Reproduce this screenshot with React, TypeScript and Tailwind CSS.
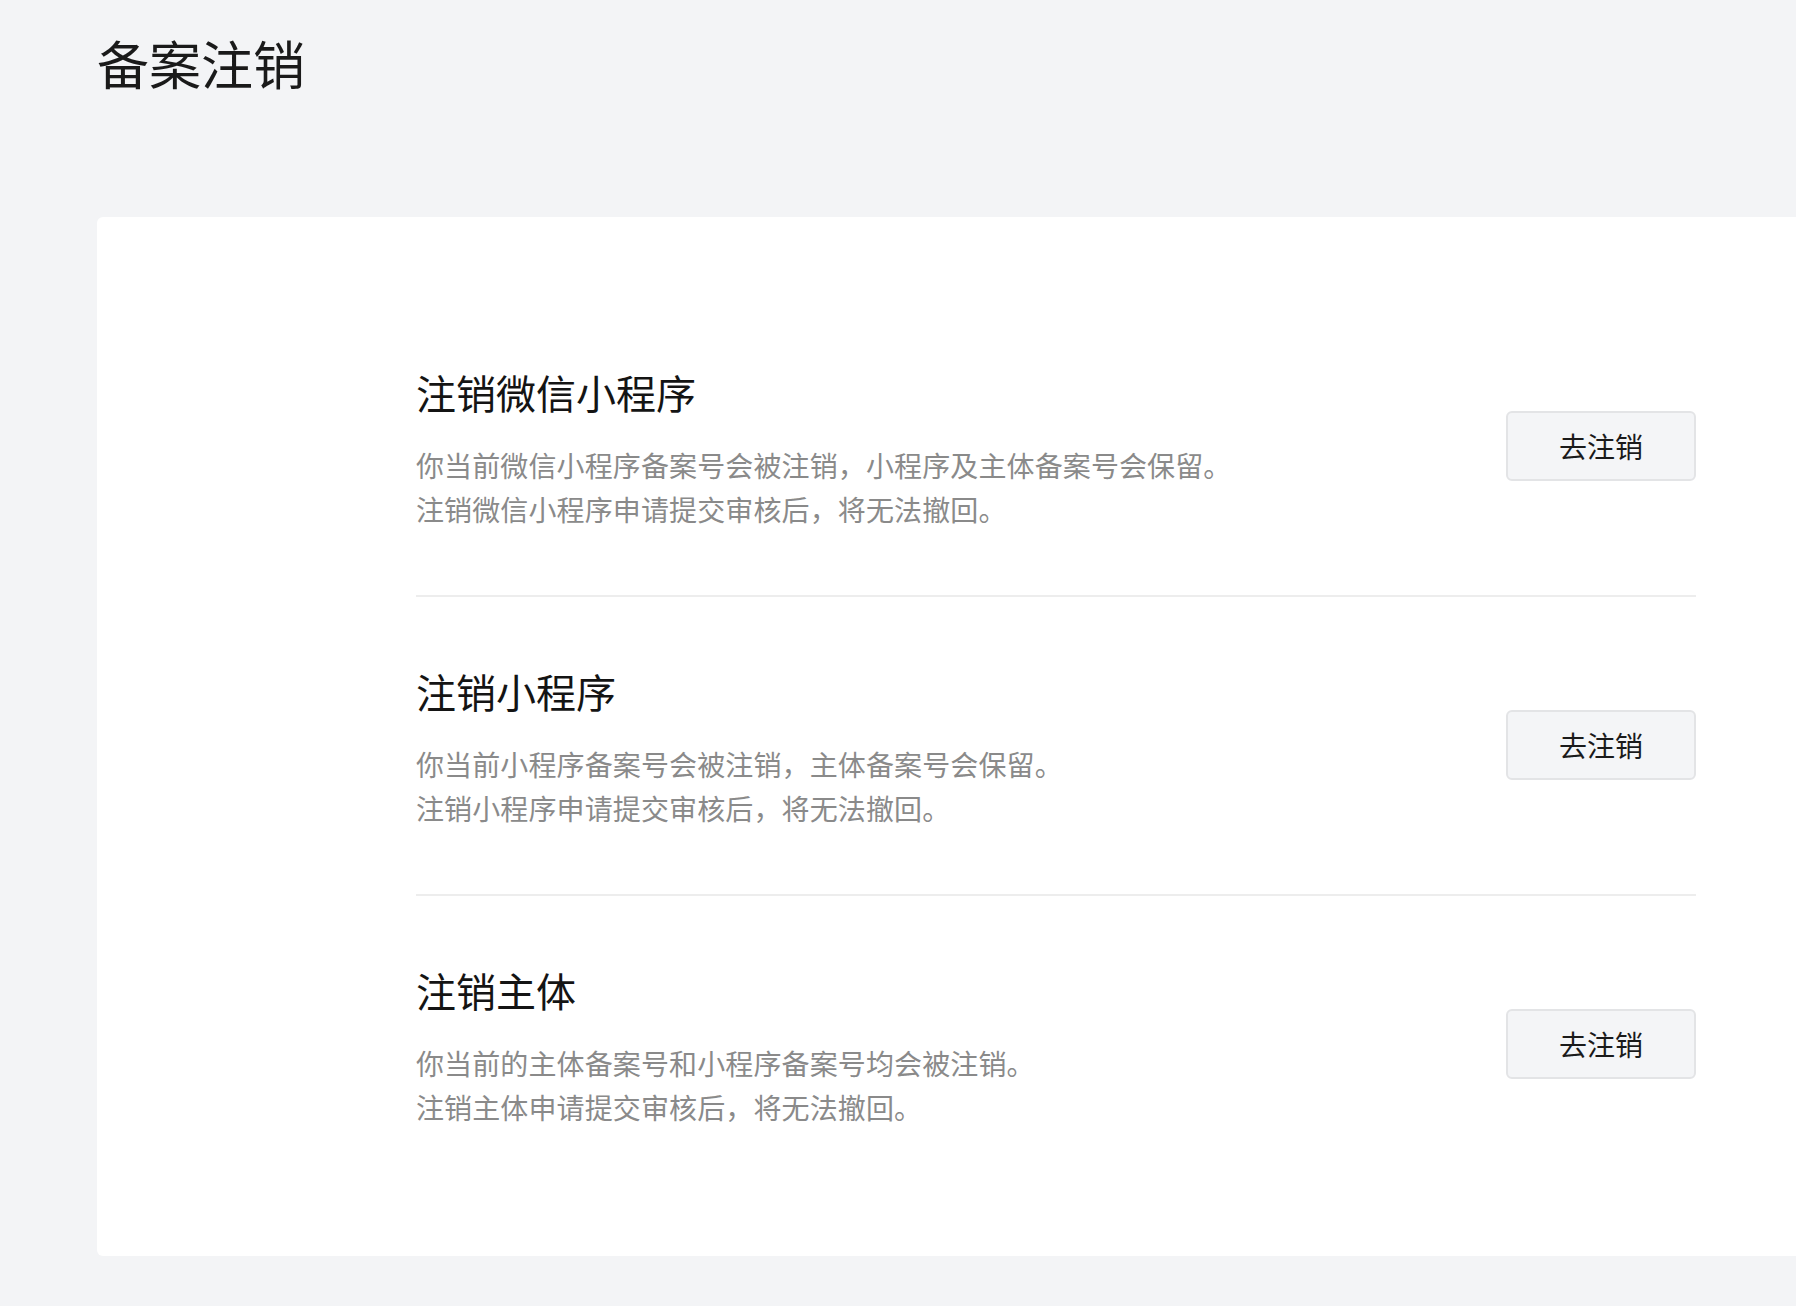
import React from 'react';

const sections = [
  {
    title: '注销微信小程序',
    lines: ['你当前微信小程序备案号会被注销，小程序及主体备案号会保留。', '注销微信小程序申请提交审核后，将无法撤回。'],
  },
  {
    title: '注销小程序',
    lines: ['你当前小程序备案号会被注销，主体备案号会保留。', '注销小程序申请提交审核后，将无法撤回。'],
  },
  {
    title: '注销主体',
    lines: ['你当前的主体备案号和小程序备案号均会被注销。', '注销主体申请提交审核后，将无法撤回。'],
  },
];

export default function App() {
  return (
    <div
      className="min-h-screen bg-[#f3f4f6] pl-[97px] pt-[27px] pb-[50px] text-[#1a1a1a]"
      style={{ fontFamily: '"Noto Sans CJK SC", "Noto Sans", sans-serif' }}
    >
      <h1 className="text-[52px] leading-[72px] font-normal">备案注销</h1>

      <div className="mt-[118px] bg-white rounded-l-[6px] pl-[319px] pr-[100px] pt-[81px] pb-[63px]">
        {sections.map((s, i) => (
          <div
            key={s.title}
            className={`flex items-center justify-between pt-[66px] pb-[64px] ${i < sections.length - 1 ? 'border-b-2 border-[#ededed]' : ''}`}
          >
            <div>
              <h2 className="text-[40px] leading-[56px] font-normal text-[#141414]">{s.title}</h2>
              <div className="mt-[23px] text-[28px] leading-[44px] tracking-[0.12px] text-[#8a8a8a]">
                {s.lines.map((l) => (
                  <p key={l}>{l}</p>
                ))}
              </div>
            </div>
            <button className="w-[190px] h-[70px] -mt-[4px] rounded-[6px] border-2 border-[#e3e4e6] bg-[#f4f5f7] text-[28px] text-[#1a1a1a]">
              去注销
            </button>
          </div>
        ))}
      </div>
    </div>
  );
}
